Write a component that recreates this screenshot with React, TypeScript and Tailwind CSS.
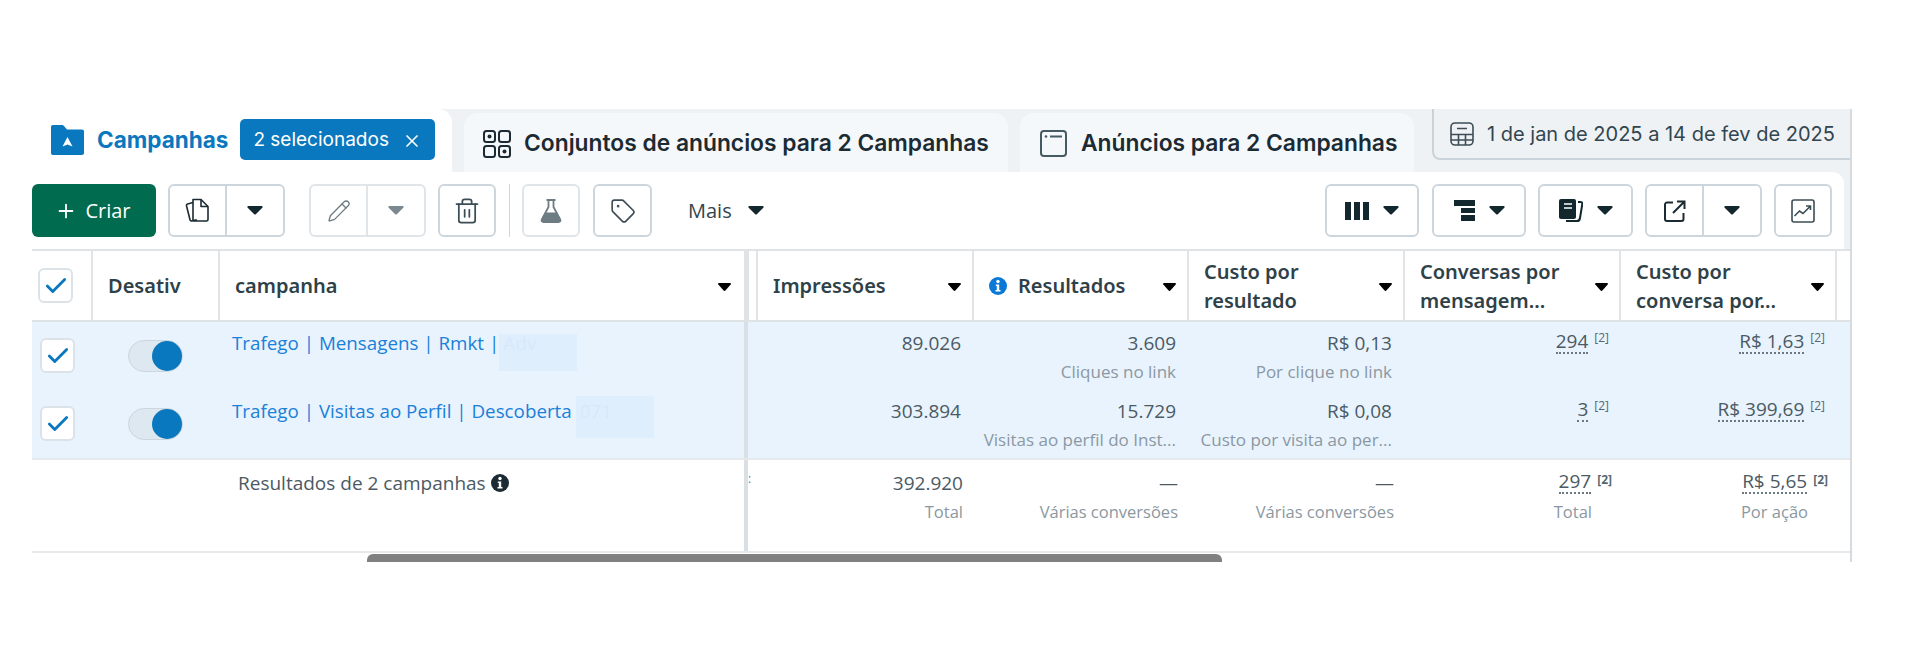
import { Check, Pencil, Plus, Tag, Trash2, X } from 'lucide-react';
import type { ReactNode } from 'react';

const Caret = ({ className = 'text-[#13272f]' }: { className?: string }) => (
  <svg width="16" height="9" viewBox="0 0 16 9" className={className}>
    <path d="M1.5 0h13c1 0 1.500 1 .8 1.800L9 8a1.400 1.400 0 0 1-2 0L.7 1.800C0 1 .5 0 1.500 0z" fill="currentColor" />
  </svg>
);

const SmallCaret = () => (
  <svg width="13" height="8" viewBox="0 0 13 8" className="mt-[2px] shrink-0 text-black">
    <path d="M1 0h11c.8 0 1.200.8.700 1.400L7.400 7.500a1.200 1.200 0 0 1-1.800 0L.3 1.400C-.2.8.2 0 1 0z" fill="currentColor" />
  </svg>
);

const FolderIcon = () => (
  <svg width="33" height="30" viewBox="0 0 33 30">
    <path d="M2 0h9c1 0 1.500.4 2.200 1.200L16 4.500h15c1.200 0 2 .8 2 2V28c0 1.200-.8 2-2 2H2c-1.200 0-2-.8-2-2V2C0 .8.800 0 2 0z" fill="#0a78be" />
    <path d="M16.500 12l5 9.500-5-2-5 2z" fill="#fff" />
  </svg>
);

const GridIcon = () => (
  <svg width="28" height="28" viewBox="0 0 28 28" fill="none" stroke="#1c2b33" strokeWidth="2">
    <rect x="1" y="1" width="11" height="11" rx="2.500" />
    <rect x="16" y="1" width="11" height="11" rx="2.500" />
    <rect x="1" y="16" width="11" height="11" rx="2.500" />
    <rect x="16" y="16" width="11" height="11" rx="2.500" />
    <circle cx="6.500" cy="6.500" r="2" fill="#1c2b33" stroke="none" />
    <circle cx="21.500" cy="21.500" r="2" fill="#1c2b33" stroke="none" />
  </svg>
);

const WindowIcon = () => (
  <svg width="27" height="27" viewBox="0 0 27 27" fill="none" stroke="#465a64" strokeWidth="2">
    <rect x="1" y="1" width="25" height="25" rx="3" />
    <circle cx="6" cy="6.500" r="1.300" fill="#465a64" stroke="none" />
    <path d="M10 6.500h12" />
  </svg>
);

const CalendarIcon = () => (
  <svg width="24" height="24" viewBox="0 0 24 24" fill="none" stroke="#3c4d55" strokeWidth="1.600">
    <rect x="1" y="1" width="22" height="22" rx="4" />
    <path d="M1 12.500h22M1 18h22M8.500 12.500V23M15.500 12.500V23M7 6.500h10" />
  </svg>
);

const CopyIcon = () => (
  <svg width="25" height="25" viewBox="0 0 25 25" fill="none" stroke="#1c2b33" strokeWidth="1.600" strokeLinejoin="round">
    <path d="M8 1.500h8l7 7v13a1.500 1.500 0 0 1-1.500 1.500h-12A1.500 1.500 0 0 1 8 21.500z" />
    <path d="M16 1.500v7h7" />
    <path d="M8 4.500L2.500 6a1.500 1.500 0 0 0-1 1.800l3.500 14c.2.800 1 1.300 1.800 1.100l5-1" />
  </svg>
);

const FlaskIcon = () => (
  <svg width="22" height="24" viewBox="0 0 22 24">
    <path d="M6.500 1h9M8.500 1v7L1.800 20.500C1 22 2 23 3.500 23h15c1.500 0 2.500-1 1.700-2.500L13.500 8V1" fill="none" stroke="#6d7b83" strokeWidth="1.800" />
    <path d="M5.500 13.500h11l4 8.500H1.500z" fill="#6d7b83" />
  </svg>
);

const ColumnsIcon = () => (
  <svg width="24" height="18" viewBox="0 0 24 18" fill="#13272f">
    <rect x="0" y="0" width="6" height="18" />
    <rect x="9" y="0" width="6" height="18" />
    <rect x="18" y="0" width="6" height="18" />
  </svg>
);

const BreakdownIcon = () => (
  <svg width="21" height="21" viewBox="0 0 21 21" fill="#13272f">
    <rect x="0" y="0" width="21" height="6" />
    <rect x="7" y="8" width="14" height="5" />
    <rect x="7" y="15" width="14" height="6" />
  </svg>
);

const ReportsIcon = () => (
  <svg width="24" height="23" viewBox="0 0 24 23">
    <rect x="0" y="0" width="17" height="20" rx="2" fill="#13272f" />
    <path d="M5 5h8M5 9h8" stroke="#fff" strokeWidth="1.500" />
    <path d="M19 3h2.500c1 0 2 .8 1.800 2L21 19c-.2 1.500-1.300 3-3 3H7" fill="none" stroke="#13272f" strokeWidth="2" />
  </svg>
);

const ExportIcon = () => (
  <svg width="22" height="22" viewBox="0 0 22 22" fill="none" stroke="#1c2b33" strokeWidth="2">
    <path d="M9 2.500H3a2 2 0 0 0-2 2V19a2 2 0 0 0 2 2h14.500a2 2 0 0 0 2-2v-6" />
    <path d="M9 13L20 2M13 1.500h7.500V9" />
  </svg>
);

const ChartIcon = () => (
  <svg width="24" height="24" viewBox="0 0 24 24" fill="none" stroke="#3c4d55" strokeWidth="1.600">
    <rect x="1" y="1" width="22" height="22" rx="2" />
    <path d="M3.500 17l5-5 3.500 2.500 7-7M15 7h4.500v4" />
  </svg>
);

const InfoDot = ({ color }: { color: string }) => (
  <svg width="18" height="18" viewBox="0 0 18 18">
    <circle cx="9" cy="9" r="9" fill={color} />
    <circle cx="9" cy="4.500" r="1.700" fill="#fff" />
    <path d="M6.800 7.500h3.400v5.500h1.300v1.500h-5V13h1.300V9H6.800z" fill="#fff" />
  </svg>
);

const IconButton = ({ children, className = '' }: { children: ReactNode; className?: string }) => (
  <button className={`flex h-[53px] items-center justify-center rounded-[6px] border-2 border-[#cdd6dc] bg-white ${className}`}>
    {children}
  </button>
);

const SplitButton = ({ icon, muted }: { icon: ReactNode; muted?: boolean }) => (
  <div className={`flex h-[53px] w-[117px] rounded-[6px] border-2 bg-white ${muted ? 'border-[#dfe5e9]' : 'border-[#cdd6dc]'}`}>
    <div className={`flex w-[57px] items-center justify-center border-r-2 ${muted ? 'border-[#dfe5e9]' : 'border-[#cdd6dc]'}`}>{icon}</div>
    <div className="flex flex-1 items-center justify-center">
      <Caret className={muted ? 'text-[#7c888f]' : 'text-[#13272f]'} />
    </div>
  </div>
);

const CheckBox = () => (
  <div className="flex h-[35px] w-[35px] items-center justify-center rounded-[6px] border-2 border-[#dce3e8] bg-white">
    <Check size={26} strokeWidth={2.600} className="text-[#0a78be]" />
  </div>
);

const Toggle = () => (
  <div className="flex h-[32px] w-[55px] items-center justify-end rounded-full border border-[#ccd6dd] bg-[#dde8f0]">
    <div className="h-[30px] w-[30px] rounded-full bg-[#0a78be]" />
  </div>
);

const HeaderCell = ({ children, last }: { children: ReactNode; last?: boolean }) => (
  <div className={`flex items-center justify-between pl-[15px] pr-[11px] text-[20px] font-semibold leading-[29px] text-[#2f4148] ${last ? '' : 'border-r-2 border-[#e1e5e8]'}`}>
    <div>{children}</div>
    <SmallCaret />
  </div>
);

const Sup = ({ total }: { total?: boolean }) => (
  <span className={`ml-[6px] text-[12px] leading-[14px] text-[#56666f] ${total ? 'mt-[3px] font-bold' : 'mt-[1px]'}`}>[2]</span>
);

const Value = ({ value, sub, total }: { value: string; sub?: string; total?: boolean }) => (
  <div className={`flex flex-col items-end ${total ? 'pr-[11px] pt-[10px]' : 'pr-[13px] pt-[8px]'}`}>
    <div className="text-[19px] leading-[26px] text-[#4b5a63]">{value}</div>
    {sub && <div className={`mt-[5px] whitespace-nowrap leading-[22px] text-[#8b98a1] ${total ? 'text-[16.5px]' : 'text-[17px]'}`}>{sub}</div>}
  </div>
);

const Attributed = ({ value, sub }: { value: string; sub?: string }) => (
  <div className={`flex flex-col items-end ${sub ? 'pr-[9px] pt-[10px]' : 'pr-[12px] pt-[8px]'}`}>
    <div className="flex items-start text-[19px] leading-[26px] text-[#4b5a63]">
      <span className="border-b-2 border-dotted border-[#6b7a82] leading-[22px]">{value}</span>
      <Sup total={!!sub} />
    </div>
    {sub && <div className="mt-[7px] pr-[20px] text-[16.5px] leading-[22px] text-[#8b98a1]">{sub}</div>}
  </div>
);

const campaigns = [
  {
    name: 'Trafego | Mensagens | Rmkt |',
    ghost: 'Adv',
    ghostClass: 'h-[37px] w-[78px] mt-[4px] ml-0 leading-[18px]',
    impressions: '89.026',
    results: '3.609',
    resultsSub: 'Cliques no link',
    cost: 'R$ 0,13',
    costSub: 'Por clique no link',
    convos: '294',
    convoCost: 'R$ 1,63',
  },
  {
    name: 'Trafego | Visitas ao Perfil | Descoberta',
    ghost: '071',
    ghostClass: 'h-[42px] w-[78px] -mt-[2px] ml-[4px] leading-[30px]',
    impressions: '303.894',
    results: '15.729',
    resultsSub: 'Visitas ao perfil do Inst...',
    cost: 'R$ 0,08',
    costSub: 'Custo por visita ao per...',
    convos: '3',
    convoCost: 'R$ 399,69',
  },
];

export default function App() {
  return (
    <div className="h-[664px] overflow-hidden bg-white pl-[32px] pt-[109px] font-['Open_Sans',sans-serif]">
      <div className="w-[1820px] border-r-2 border-[#d5dbdf]">
        {/* tabs */}
        <div className="flex h-[63px] bg-[#eff2f5] font-['Inter',sans-serif]">
          <div className="flex w-[420px] items-start rounded-tr-[14px] bg-white pl-[19px] pt-[10px]">
            <div className="flex h-[41px] items-center">
              <FolderIcon />
              <span className="ml-[13px] mt-[1px] whitespace-nowrap text-[22.5px] font-bold text-[#0a78be]">Campanhas</span>
              <div className="ml-[12px] flex h-[41px] w-[195px] shrink-0 items-center justify-between rounded-[5px] bg-[#0a78be] px-[13px] pt-[2px] text-[19px] text-white">
                2 selecionados
                <X size={20} strokeWidth={2} />
              </div>
            </div>
          </div>
          <div className="ml-[12px] mt-[4px] flex w-[544px] items-center rounded-t-[14px] bg-[#f5f8fa] pl-[19px] pt-[2px]">
            <GridIcon />
            <span className="ml-[13px] whitespace-nowrap text-[22.8px] font-semibold text-[#1c2b33]">Conjuntos de anúncios para 2 Campanhas</span>
          </div>
          <div className="ml-[12px] mt-[4px] flex w-[394px] items-center rounded-t-[14px] bg-[#f5f8fa] pl-[20px] pt-[2px]">
            <WindowIcon />
            <span className="ml-[14px] whitespace-nowrap text-[22.8px] font-semibold text-[#1c2b33]">Anúncios para 2 Campanhas</span>
          </div>
          <div className="ml-[18px] flex h-[51px] flex-1 items-center rounded-bl-[8px] border-b-2 border-l-2 border-[#c9d3d9] pl-[16px] pt-[1px]">
            <CalendarIcon />
            <span className="ml-[13px] whitespace-nowrap text-[20px] text-[#32454f]">1 de jan de 2025 a 14 de fev de 2025</span>
          </div>
        </div>

        {/* toolbar */}
        <div className="h-[79px] border-b-2 border-[#dfe3e6] bg-[#eff2f5]">
          <div className="mr-[6px] flex h-[77px] items-start justify-between rounded-tr-[12px] bg-white pr-[12px] pt-[12px]">
            <div className="flex items-center">
              <button className="flex h-[53px] w-[124px] items-center justify-center gap-[8px] rounded-[6px] bg-[#006b4e] pr-[2px] text-[20px] text-white">
                <Plus size={22} />
                Criar
              </button>
              <div className="ml-[12px]"><SplitButton icon={<CopyIcon />} /></div>
              <div className="ml-[24px]"><SplitButton muted icon={<Pencil size={24} strokeWidth={1.300} className="text-[#6d7b83]" />} /></div>
              <IconButton className="ml-[12px] w-[58px]"><Trash2 size={28} strokeWidth={1.500} className="text-[#3c4d55]" /></IconButton>
              <div className="ml-[13px] h-[53px] w-[1px] bg-[#cdd6dc]" />
              <IconButton className="ml-[12px] w-[58px] border-[#dfe5e9]"><FlaskIcon /></IconButton>
              <IconButton className="ml-[13px] w-[59px]"><Tag size={26} strokeWidth={1.500} className="text-[#3c4d55]" /></IconButton>
              <div className="ml-[36px] flex items-center gap-[16px] text-[20px] text-[#32454f]">
                Mais
                <Caret />
              </div>
            </div>
            <div className="flex items-center">
              <IconButton className="w-[94px] gap-[14px]"><ColumnsIcon /><Caret /></IconButton>
              <IconButton className="ml-[13px] w-[94px] gap-[14px]"><BreakdownIcon /><Caret /></IconButton>
              <IconButton className="ml-[12px] w-[95px] gap-[14px]"><ReportsIcon /><Caret /></IconButton>
              <div className="ml-[12px]"><SplitButton icon={<ExportIcon />} /></div>
              <IconButton className="ml-[12px] w-[58px]"><ChartIcon /></IconButton>
            </div>
          </div>
        </div>

        {/* table header */}
        <div className="grid h-[71px] grid-cols-[61px_127px_524px_14px_216px_215px_216px_216px_216px_1fr] border-b-2 border-[#dfe3e6] font-['Noto_Sans',sans-serif]">
          <div className="flex items-center border-r-2 border-[#e1e5e8] pl-[6px]"><CheckBox /></div>
          <div className="flex items-center border-r-2 border-[#e1e5e8] pl-[15px] text-[20px] font-semibold text-[#2f4148]">Desativ</div>
          <div className="flex items-center justify-between pl-[15px] pr-[13px] text-[20px] font-semibold text-[#2f4148]">
            campanha
            <SmallCaret />
          </div>
          <div className="border-l-[5px] border-r-2 border-l-[#dfe3e6] border-r-[#e1e5e8]" />
          <HeaderCell>Impressões</HeaderCell>
          <HeaderCell>
            <span className="flex items-center gap-[11px]"><InfoDot color="#0a78d6" />Resultados</span>
          </HeaderCell>
          <HeaderCell>Custo por<br />resultado</HeaderCell>
          <HeaderCell>Conversas por<br />mensagem...</HeaderCell>
          <HeaderCell>Custo por<br />conversa por...</HeaderCell>
          <div />
        </div>

        {/* campaign rows */}
        {campaigns.map((c) => (
          <div key={c.name} className="grid h-[68px] grid-cols-[61px_127px_524px_14px_216px_215px_216px_216px_216px_1fr] bg-[#e8f3fe]">
            <div className="pl-[8px] pt-[16px]"><CheckBox /></div>
            <div className="pl-[35px] pt-[18px]"><Toggle /></div>
            <div className="flex items-start pl-[12px] pt-[8px] text-[18.8px] leading-[26px] text-[#1a80d8]">
              <span className="whitespace-nowrap">{c.name}</span>
              <span className={`shrink-0 bg-[#dfeefc] pl-[4px] text-[#d6e9fb] ${c.ghostClass}`}>{c.ghost}</span>
            </div>
            <div className="flex"><div className="w-[4px] bg-[#d8dfe5]" /></div>
            <Value value={c.impressions} />
            <Value value={c.results} sub={c.resultsSub} />
            <Value value={c.cost} sub={c.costSub} />
            <Attributed value={c.convos} />
            <Attributed value={c.convoCost} />
            <div />
          </div>
        ))}

        {/* totals */}
        <div className="grid h-[95px] grid-cols-[61px_127px_524px_14px_216px_215px_216px_216px_216px_1fr] border-y-2 border-[#e6e9eb]">
          <div />
          <div />
          <div className="flex items-start gap-[5px] pl-[18px] pt-[10px] text-[19px] leading-[26px] text-[#4b5a63]">
            Resultados de 2 campanhas
            <span className="mt-[4px]"><InfoDot color="#1c2b33" /></span>
          </div>
          <div className="flex">
            <div className="w-[4px] bg-[#d8dfe5]" />
            <span className="pt-[12px] text-[12px] leading-[14px] text-[#6b7a82]">:</span>
          </div>
          <Value total value="392.920" sub="Total" />
          <Value total value="—" sub="Várias conversões" />
          <Value total value="—" sub="Várias conversões" />
          <Attributed value="297" sub="Total" />
          <Attributed value="R$ 5,65" sub="Por ação" />
          <div />
        </div>

        {/* scrollbar */}
        <div className="mt-[1px] h-[8px] pl-[335px]">
          <div className="h-[8px] w-[855px] rounded-t-[6px] bg-[#808080]" />
        </div>
      </div>
    </div>
  );
}
